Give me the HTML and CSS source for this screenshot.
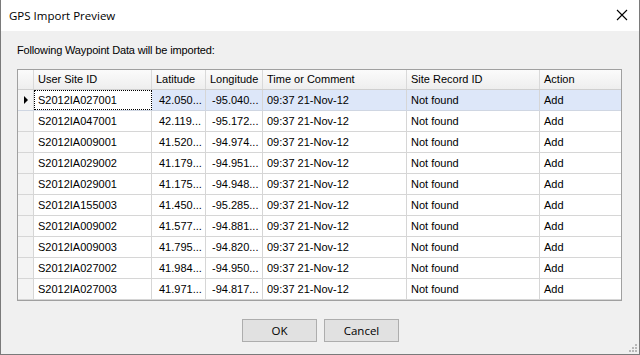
FILE: index.html
```html
<!DOCTYPE html>
<html lang="en">
<head>
  <meta charset="UTF-8" />
  <title>GPS Import Preview</title>
  <link rel="stylesheet" href="styles.css">
</head>
<body>

  <div class="window">
    <div class="titlebar">
      <span class="title">GPS Import Preview</span>
      <svg class="close" width="12" height="12" viewBox="0 0 12 12">
        <path d="M1 1 L11 11 M11 1 L1 11" stroke="#000" stroke-width="1.1" fill="none"/>
      </svg>
    </div>

    <div class="content">
      <div class="label">Following Waypoint Data will be imported:</div>

      <div class="grid">
        <div class="row head">
          <div class="cell rh"></div>
          <div class="cell">User Site ID</div>
          <div class="cell">Latitude</div>
          <div class="cell">Longitude</div>
          <div class="cell">Time or Comment</div>
          <div class="cell">Site Record ID</div>
          <div class="cell last">Action</div>
        </div>
        <div id="rows"></div>
      </div>

      <div class="buttons">
        <button>OK</button>
        <button>Cancel</button>
      </div>
    </div>

    <svg class="grip" width="9" height="9" viewBox="0 0 9 9">
      <rect x="7" y="1" width="2" height="2" fill="#b8b8b8"/>
      <rect x="4" y="4" width="2" height="2" fill="#b8b8b8"/>
      <rect x="7" y="4" width="2" height="2" fill="#b8b8b8"/>
      <rect x="1" y="7" width="2" height="2" fill="#b8b8b8"/>
      <rect x="4" y="7" width="2" height="2" fill="#b8b8b8"/>
      <rect x="7" y="7" width="2" height="2" fill="#b8b8b8"/>
    </svg>
  </div>

  <script>
    const waypoints = [
      ["S2012IA027001", "42.050...", "-95.040..."],
      ["S2012IA047001", "42.119...", "-95.172..."],
      ["S2012IA009001", "41.520...", "-94.974..."],
      ["S2012IA029002", "41.179...", "-94.951..."],
      ["S2012IA029001", "41.175...", "-94.948..."],
      ["S2012IA155003", "41.450...", "-95.285..."],
      ["S2012IA009002", "41.577...", "-94.881..."],
      ["S2012IA009003", "41.795...", "-94.820..."],
      ["S2012IA027002", "41.984...", "-94.950..."],
      ["S2012IA027003", "41.971...", "-94.817..."]
    ];
    const rows = document.getElementById('rows');

    waypoints.forEach((wp, i) => {
      const row = document.createElement('div');
      row.className = 'row' + (i === 0 ? ' selected' : '');
      row.innerHTML =
        '<div class="cell rh">' + (i === 0 ? '<span class="arrow"></span>' : '') + '</div>' +
        '<div class="cell id' + (i === 0 ? ' focus' : '') + '">' + wp[0] + '</div>' +
        '<div class="cell num lat">' + wp[1] + '</div>' +
        '<div class="cell num lon">' + wp[2] + '</div>' +
        '<div class="cell">09:37 21-Nov-12</div>' +
        '<div class="cell">Not found</div>' +
        '<div class="cell last">Add</div>';
      rows.appendChild(row);
    });
  </script>

</body>
</html>
```

FILE: styles.css
```css
body {
  margin: 0;
  background: #3a3a3a;
  font-family: "Liberation Sans", Arial, sans-serif;
}

.window {
  position: relative;
  width: 640px;
  height: 355px;
  box-sizing: border-box;
  background: #f0f0f0;
  border: 1px solid #7a7a7a;
  border-top: none;
  display: flex;
  flex-direction: column;
}

.titlebar {
  height: 31px;
  background: #ffffff;
  display: flex;
  align-items: center;
  justify-content: space-between;
  padding: 0 10px 0 8px;
  flex-shrink: 0;
}

.title {
  font-family: "Open Sans", "Noto Sans", sans-serif;
  font-size: 11.5px;
  color: #000;
  margin-top: -1px;
}

.close {
  margin-right: 1px;
  margin-top: -1px;
}

.content {
  padding: 12px 17px 0 16px;
}

.label {
  font-size: 11px;
  line-height: 14px;
  letter-spacing: -0.15px;
  color: #000;
}

.grid {
  margin-top: 12px;
  width: 605px;
  height: 232px;
  box-sizing: border-box;
  border: 1px solid #a0a0a0;
  background: #ffffff;
  overflow: hidden;
}

.row {
  display: grid;
  grid-template-columns: 16px 118px 54px 57px 144px 133px 81px;
  height: 21px;
  box-sizing: border-box;
  border-bottom: 1px solid #d6d6d6;
}

.row.head {
  height: 20px;
  background: linear-gradient(#fbfbfb, #eeeeee);
  border-bottom: 1px solid #cfcfcf;
}

.cell {
  box-sizing: border-box;
  border-right: 1px solid #d6d6d6;
  font-size: 11px;
  line-height: 20px;
  padding-left: 4px;
  color: #000;
  white-space: nowrap;
  overflow: hidden;
}

.head .cell {
  line-height: 19px;
  border-right-color: #d9d9d9;
}

.cell.last {
  border-right: none;
}

.cell.rh {
  background: #f4f4f4;
  padding: 0;
  display: flex;
  align-items: center;
  justify-content: center;
}

.head .cell.rh {
  background: transparent;
}

.cell.lat {
  padding-left: 7px;
}

.cell.lon {
  padding-left: 6px;
}

.selected .cell {
  background: #dde7f9;
}

.selected .cell.rh {
  background: #f4f4f4;
}

.selected .cell.focus {
  background: #ffffff;
  border: 1px dotted #000;
  line-height: 18px;
  padding-left: 3px;
}

.selected {
  border-bottom-color: #cfd6e2;
}

.arrow {
  width: 0;
  height: 0;
  border-left: 4px solid #000;
  border-top: 4px solid transparent;
  border-bottom: 4px solid transparent;
  margin-left: 1px;
}

.buttons {
  margin-top: 18px;
  display: flex;
  justify-content: center;
  gap: 7px;
  padding-left: 2px;
}

button {
  width: 75px;
  height: 23px;
  background: #e1e1e1;
  border: 1px solid #adadad;
  font-family: "Open Sans", "Noto Sans", sans-serif;
  font-size: 11.5px;
  color: #000;
  padding: 0;
}

.grip {
  position: absolute;
  right: 2px;
  bottom: 2px;
}
```
